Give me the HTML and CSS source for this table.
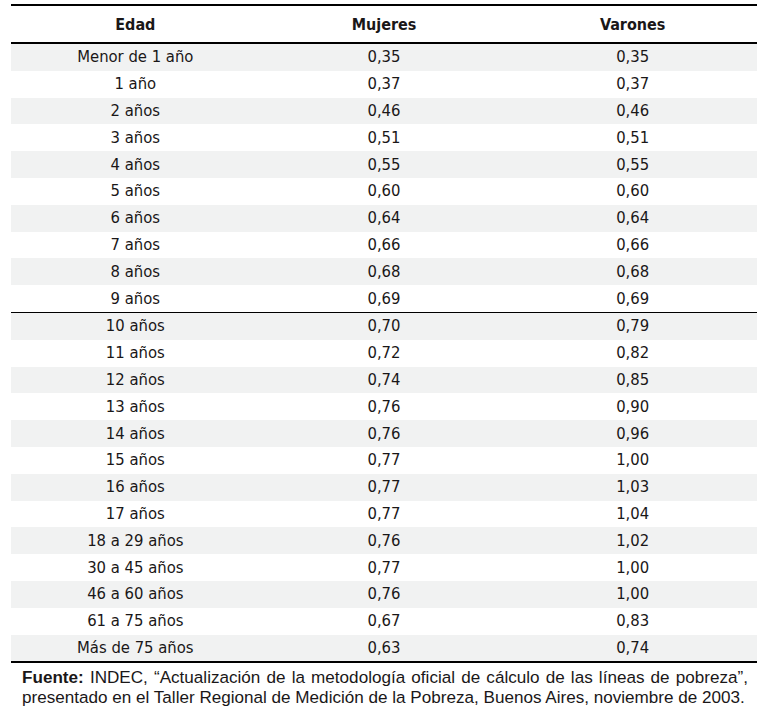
FILE: index.html
```html
<!DOCTYPE html>
<html lang="es">
<head>
<meta charset="utf-8">
<link rel="stylesheet" href="styles.css">
</head>
<body>
<div class="wrap">
  <table class="data">
    <thead>
      <tr><th>Edad</th><th>Mujeres</th><th>Varones</th></tr>
    </thead>
    <tbody>
      <tr><td>Menor de 1 año</td><td>0,35</td><td>0,35</td></tr>
      <tr><td>1 año</td><td>0,37</td><td>0,37</td></tr>
      <tr><td>2 años</td><td>0,46</td><td>0,46</td></tr>
      <tr><td>3 años</td><td>0,51</td><td>0,51</td></tr>
      <tr><td>4 años</td><td>0,55</td><td>0,55</td></tr>
      <tr><td>5 años</td><td>0,60</td><td>0,60</td></tr>
      <tr><td>6 años</td><td>0,64</td><td>0,64</td></tr>
      <tr><td>7 años</td><td>0,66</td><td>0,66</td></tr>
      <tr><td>8 años</td><td>0,68</td><td>0,68</td></tr>
      <tr class="split"><td>9 años</td><td>0,69</td><td>0,69</td></tr>
      <tr><td>10 años</td><td>0,70</td><td>0,79</td></tr>
      <tr><td>11 años</td><td>0,72</td><td>0,82</td></tr>
      <tr><td>12 años</td><td>0,74</td><td>0,85</td></tr>
      <tr><td>13 años</td><td>0,76</td><td>0,90</td></tr>
      <tr><td>14 años</td><td>0,76</td><td>0,96</td></tr>
      <tr><td>15 años</td><td>0,77</td><td>1,00</td></tr>
      <tr><td>16 años</td><td>0,77</td><td>1,03</td></tr>
      <tr><td>17 años</td><td>0,77</td><td>1,04</td></tr>
      <tr><td>18 a 29 años</td><td>0,76</td><td>1,02</td></tr>
      <tr><td>30 a 45 años</td><td>0,77</td><td>1,00</td></tr>
      <tr><td>46 a 60 años</td><td>0,76</td><td>1,00</td></tr>
      <tr><td>61 a 75 años</td><td>0,67</td><td>0,83</td></tr>
      <tr><td>Más de 75 años</td><td>0,63</td><td>0,74</td></tr>
    </tbody>
  </table>
  <p class="source"><b>Fuente:</b> INDEC, “Actualización de la metodología oficial de cálculo de las líneas de pobreza”, presentado en el Taller Regional de Medición de la Pobreza, Buenos Aires, noviembre de 2003.</p>
</div>
</body>
</html>
```
FILE: styles.css
```css
html, body {
  margin: 0;
  padding: 0;
  background: #ffffff;
}

.wrap {
  width: 746px;
  margin: 4px 0 0 11px;
}

.data {
  width: 100%;
  border-collapse: collapse;
  table-layout: fixed;
  font-family: "DejaVu Sans Condensed", "Liberation Sans", sans-serif;
  color: #1a1718;
  border-top: 2px solid #000;
  border-bottom: 2px solid #000;
}

.data th {
  height: 36px;
  padding: 0;
  font-size: 16px;
  font-weight: bold;
  text-align: center;
  border-bottom: 2px solid #000;
}

.data td {
  height: 26.8px;
  padding: 0;
  font-size: 16.5px;
  text-align: center;
  line-height: 20px;
}

.data tbody tr:nth-child(odd) {
  background: #f1f2f2;
}

.data tr.split td {
  border-bottom: 1px solid #000;
}

.source {
  margin: 5px 0 0 0;
  padding: 0 9px 0 11px;
  font-family: "Liberation Sans", Arial, sans-serif;
  font-size: 17.1px;
  line-height: 20px;
  text-align: justify;
  color: #1a1718;
}
```
